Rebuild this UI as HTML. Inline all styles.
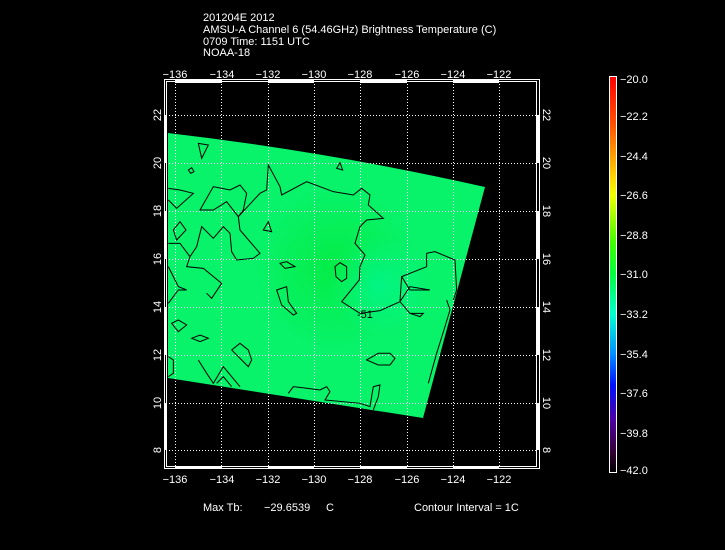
<!DOCTYPE html>
<html><head><meta charset="utf-8"><style>
html,body{margin:0;padding:0;background:#000;width:725px;height:550px;overflow:hidden}
svg{display:block}
text{font-family:"Liberation Sans",sans-serif;fill:#fff;font-size:11px}
</style></head><body>
<svg width="725" height="550" viewBox="0 0 725 550">
<defs>
<linearGradient id="cb" x1="0" y1="0" x2="0" y2="1">
<stop offset="0" stop-color="#ff0000"/>
<stop offset="0.12" stop-color="#ff5000"/>
<stop offset="0.25" stop-color="#ffd000"/>
<stop offset="0.3" stop-color="#f0ff00"/>
<stop offset="0.42" stop-color="#40ff00"/>
<stop offset="0.5" stop-color="#00ff40"/>
<stop offset="0.6" stop-color="#00ffd0"/>
<stop offset="0.7" stop-color="#0090ff"/>
<stop offset="0.78" stop-color="#0010ff"/>
<stop offset="0.87" stop-color="#5000a0"/>
<stop offset="0.95" stop-color="#300030"/>
<stop offset="1" stop-color="#000000"/>
</linearGradient>
<radialGradient id="g1" cx="335" cy="268" r="80" gradientUnits="userSpaceOnUse">
<stop offset="0" stop-color="#00e828" stop-opacity="0.55"/>
<stop offset="1" stop-color="#00e828" stop-opacity="0"/>
</radialGradient>
<radialGradient id="g2" cx="378" cy="285" r="50" gradientUnits="userSpaceOnUse">
<stop offset="0" stop-color="#00f8a0" stop-opacity="0.6"/>
<stop offset="1" stop-color="#00f8a0" stop-opacity="0"/>
</radialGradient>
<clipPath id="pc"><path d="M168,133 Q330,152 485,187 L423,418 L168,378 Z"/></clipPath>
</defs>
<text x="203" y="21">201204E 2012</text>
<text x="203" y="33">AMSU-A Channel 6 (54.46GHz) Brightness Temperature (C)</text>
<text x="203" y="45">0709 Time: 1151 UTC</text>
<text x="203" y="56">NOAA-18</text>

<path d="M168,133 Q330,152 485,187 L423,418 L168,378 Z" fill="#08f26a"/>
<g clip-path="url(#pc)">
<rect x="160" y="120" width="340" height="310" fill="url(#g1)"/>
<rect x="160" y="120" width="340" height="310" fill="url(#g2)"/>
</g>

<g stroke="#fff" stroke-width="1" stroke-dasharray="1 2" fill="none">
<path d="M175.5,81V466M221.5,81V466M268.5,81V466M314.5,81V466M360.5,81V466M407.5,81V466M453.5,81V466M499.5,81V466"/>
<path d="M166,115.5H537M166,163.5H537M166,211.5H537M166,259.5H537M166,307.5H537M166,355.5H537M166,403.5H537M166,450.5H537"/>
</g>

<g transform="translate(160,120) scale(0.3333)" fill="none" stroke="#000" stroke-width="3">
<path d="M140,520 L155,535 185,490 130,445 80,440 90,410 110,380 125,320 160,355 190,320 210,340 215,395 230,420 280,415 300,400 240,330 235,290 300,220 320,210 325,135 360,200 365,225 440,185 520,215 580,225 605,205 630,225 625,255 670,295 620,300 600,320 585,370 615,405 600,440 598,480 545,545 600,580 660,572 720,545 725,470 800,440 800,400 825,395 885,420 890,510 880,540"/>
<path d="M120,270 160,200 210,210 240,195 260,220 250,270 235,290 200,245 160,270Z"/>
<path d="M525,440 540,428 560,440 560,475 545,485 528,470Z"/>
<path d="M350,510 380,500 385,545 410,580 400,585 365,555Z"/>
<path d="M40,330 60,305 78,330 50,360Z"/>
<path d="M215,690 240,670 265,690 275,720 265,740Z"/>
<path d="M620,720 655,700 690,700 705,715 690,735 655,735Z"/>
<path d="M385,820 400,800 440,805 480,810 500,800 510,815 495,840 600,850 630,860 640,800 660,795 655,830 640,870"/>
<path d="M115,720 140,760 160,790 190,740 240,800"/>
<path d="M170,790 190,770 215,800"/>
<path d="M25,205 60,210 100,220 50,265 25,240"/>
<path d="M25,370 60,370 90,410"/>
<path d="M860,540 870,570 855,620 830,700 805,790"/>
<path d="M35,610 55,600 80,615 55,635Z"/>
<path d="M95,655 120,645 145,655 120,665Z"/>
<path d="M360,430 380,425 405,440 375,445Z"/>
<path d="M115,70 145,75 125,115Z"/>
<path d="M530,145 540,128 548,150Z"/>
<path d="M85,150 95,143 102,155 92,160Z"/>
<path d="M310,330 325,305 335,335Z"/>
<path d="M725,470 750,510 810,510 750,500 720,545 750,580 790,580 780,590 750,580"/>
<path d="M25,440 55,500 80,510 55,510 25,550"/>
<path d="M25,710 40,720 40,760 25,770"/>
</g>
<text x="357" y="318" font-size="9" style="fill:#000">-51</text>

<g fill="none" stroke="#fff">
<rect x="164.5" y="79.5" width="375" height="389"/>
<rect x="166.5" y="81.5" width="370" height="385"/>
</g>
<g fill="#fff">
<rect x="175" y="80" width="47" height="3"/><rect x="268" y="80" width="46" height="3"/><rect x="360" y="80" width="47" height="3"/><rect x="453" y="80" width="46" height="3"/>
<rect x="175" y="466" width="47" height="3"/><rect x="268" y="466" width="46" height="3"/><rect x="360" y="466" width="47" height="3"/><rect x="453" y="466" width="46" height="3"/>
<rect x="164" y="115" width="3" height="48"/><rect x="164" y="211" width="3" height="48"/><rect x="164" y="307" width="3" height="48"/><rect x="164" y="403" width="3" height="47"/>
<rect x="537" y="115" width="3" height="48"/><rect x="537" y="211" width="3" height="48"/><rect x="537" y="307" width="3" height="48"/><rect x="537" y="403" width="3" height="47"/>
</g>

<g text-anchor="middle">
<text x="175" y="78">−136</text><text x="222" y="78">−134</text><text x="268" y="78">−132</text><text x="314" y="78">−130</text><text x="360" y="78">−128</text><text x="407" y="78">−126</text><text x="453" y="78">−124</text><text x="499" y="78">−122</text>
<text x="175" y="483">−136</text><text x="222" y="483">−134</text><text x="268" y="483">−132</text><text x="314" y="483">−130</text><text x="360" y="483">−128</text><text x="407" y="483">−126</text><text x="453" y="483">−124</text><text x="499" y="483">−122</text>
</g>
<g text-anchor="middle">
<text transform="translate(161,115) rotate(-90)">22</text>
<text transform="translate(161,163) rotate(-90)">20</text>
<text transform="translate(161,211) rotate(-90)">18</text>
<text transform="translate(161,259) rotate(-90)">16</text>
<text transform="translate(161,307) rotate(-90)">14</text>
<text transform="translate(161,355) rotate(-90)">12</text>
<text transform="translate(161,403) rotate(-90)">10</text>
<text transform="translate(161,450) rotate(-90)">8</text>
<text transform="translate(543,115) rotate(90)">22</text>
<text transform="translate(543,163) rotate(90)">20</text>
<text transform="translate(543,211) rotate(90)">18</text>
<text transform="translate(543,259) rotate(90)">16</text>
<text transform="translate(543,307) rotate(90)">14</text>
<text transform="translate(543,355) rotate(90)">12</text>
<text transform="translate(543,403) rotate(90)">10</text>
<text transform="translate(543,450) rotate(90)">8</text>
</g>

<rect x="609.5" y="76.5" width="7" height="396" fill="url(#cb)" stroke="#fff"/>
<g>
<text x="620" y="83">−20.0</text>
<text x="620" y="120">−22.2</text>
<text x="620" y="160">−24.4</text>
<text x="620" y="199">−26.6</text>
<text x="620" y="239">−28.8</text>
<text x="620" y="278">−31.0</text>
<text x="620" y="318">−33.2</text>
<text x="620" y="358">−35.4</text>
<text x="620" y="397">−37.6</text>
<text x="620" y="437">−39.8</text>
<text x="620" y="474">−42.0</text>
</g>

<text x="203" y="511">Max Tb:</text>
<text x="264" y="511">−29.6539</text>
<text x="326" y="511">C</text>
<text x="414" y="511">Contour Interval = 1C</text>
</svg>
</body></html>
